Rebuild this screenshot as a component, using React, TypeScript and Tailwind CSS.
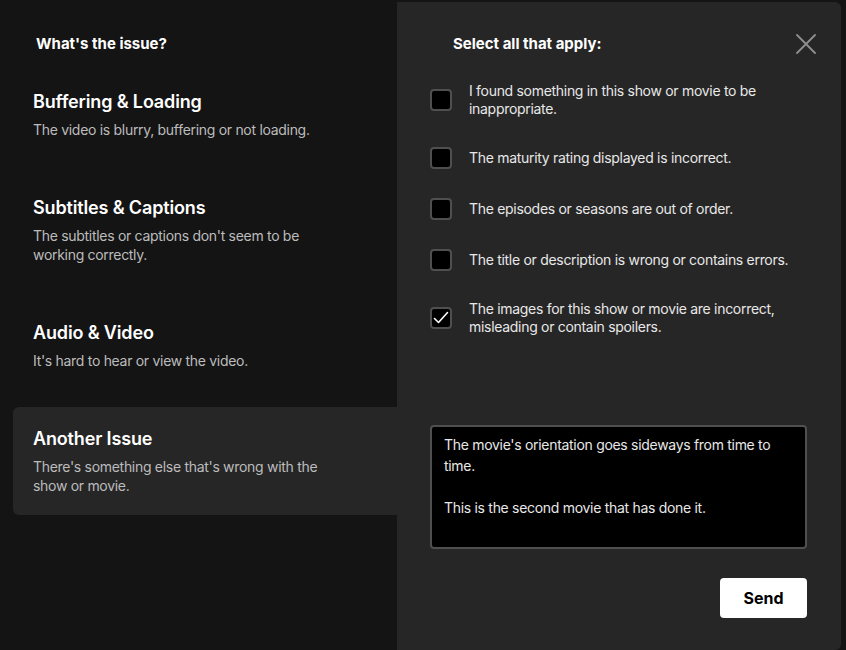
import React from "react";

const issues = [
  { title: "Buffering & Loading", desc: "The video is blurry, buffering or not loading." },
  { title: "Subtitles & Captions", desc: "The subtitles or captions don't seem to be working correctly." },
  { title: "Audio & Video", desc: "It's hard to hear or view the video." },
  { title: "Another Issue", desc: "There's something else that's wrong with the show or movie.", active: true },
];

const options = [
  { label: "I found something in this show or movie to be inappropriate.", checked: false },
  { label: "The maturity rating displayed is incorrect.", checked: false },
  { label: "The episodes or seasons are out of order.", checked: false },
  { label: "The title or description is wrong or contains errors.", checked: false },
  { label: "The images for this show or movie are incorrect, misleading or contain spoilers.", checked: true },
];

export default function App() {
  return (
    <div
      className="w-[846px] h-[650px] bg-[#141414] flex pt-[2px] overflow-hidden"
      style={{ fontFamily: "Inter, 'Noto Sans', Roboto, sans-serif" }}
    >
      <div className="w-[397px] shrink-0 pl-[13px] flex flex-col">
        <h2 className="pl-[23px] pt-[32px] text-[15px] leading-[20px] font-bold text-white">
          What's the issue?
        </h2>
        <div className="mt-[16px] flex flex-col gap-[17px]">
          {issues.map((it) => (
            <div
              key={it.title}
              className={
                it.active
                  ? "bg-[#262626] rounded-l-md pl-[20px] pt-[20px] pb-[20px]"
                  : "pl-[20px] pt-[20px] pb-[20px]"
              }
            >
              <div className="text-[18px] leading-[24px] font-semibold tracking-[-0.15px] text-white">{it.title}</div>
              <div className="mt-[6px] w-[300px] text-[14px] leading-[19px] tracking-[-0.3px] text-[#bcbcbc]">{it.desc}</div>
            </div>
          ))}
        </div>
      </div>
      <div className="w-[444px] h-[648px] shrink-0 bg-[#262626] rounded-r-md pl-[33px] pr-[34px] flex flex-col">
        <div className="pt-[32px] flex items-center justify-between">
          <h2 className="pl-[23px] text-[15px] leading-[20px] font-bold text-white">Select all that apply:</h2>
          <svg width="20" height="20" viewBox="0 0 20 20" className="-mr-[9px] -mt-[1px]" fill="none">
            <path d="M1 1L19 19M19 1L1 19" stroke="#8f8f8f" strokeWidth="1.8" strokeLinecap="round" />
          </svg>
        </div>
        <div className="mt-[28px] flex flex-col gap-[29px]">
          {options.map((o) => (
            <div key={o.label} className="flex items-center gap-[17px]">
              <div className="w-[22px] h-[22px] shrink-0 rounded-[4px] border-2 border-[#4f4f4f] bg-black flex items-center justify-center">
                {o.checked && (
                  <svg width="18" height="18" viewBox="0 0 18 18" fill="none">
                    <path d="M2.5 9.5L6.5 13.5L15.5 3.5" stroke="white" strokeWidth="1.6" strokeLinecap="round" strokeLinejoin="round" />
                  </svg>
                )}
              </div>
              <div className="flex-1 text-[14px] leading-[18px] tracking-[-0.3px] text-[#e8e8e8]">{o.label}</div>
            </div>
          ))}
        </div>
        <textarea
          className="mt-[89px] w-full h-[124px] resize-none rounded-[4px] border-2 border-[#4f4f4f] bg-black px-[12px] pt-[7px] text-[14px] leading-[21px] tracking-[-0.3px] text-[#e8e8e8] outline-none"
          defaultValue={"The movie's orientation goes sideways from time to time.\n\nThis is the second movie that has done it."}
        />
        <button className="mt-[29px] self-end w-[87px] h-[40px] rounded-[4px] bg-white text-black text-[16px] font-bold">
          Send
        </button>
      </div>
    </div>
  );
}
